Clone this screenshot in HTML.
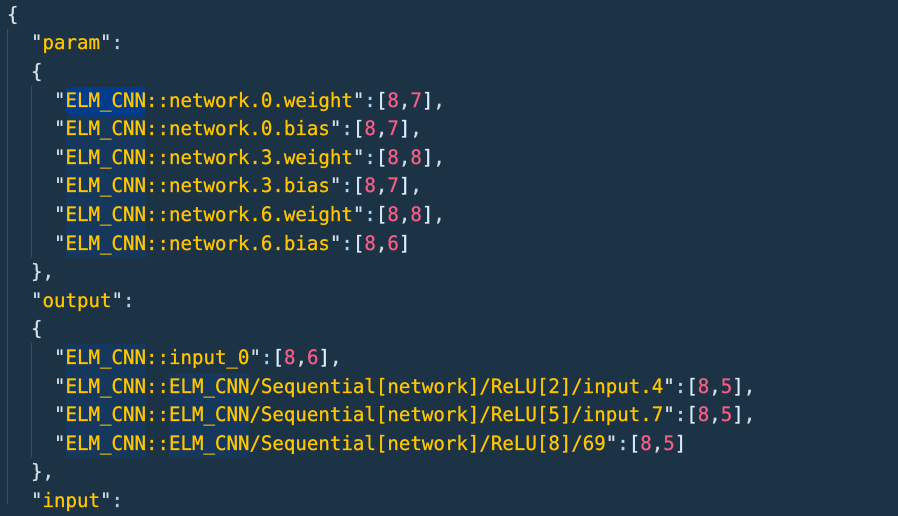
<!DOCTYPE html>
<html><head><meta charset="utf-8"><style>
html,body{margin:0;padding:0;}
body{width:898px;height:504px;overflow:hidden;background:#1c3346;position:relative;font-family:"DejaVu Sans Mono","Liberation Mono",monospace;font-size:19.1px;}
.l{position:absolute;left:0;height:28.6px;line-height:28.6px;white-space:pre;color:#d6dde3;-webkit-text-stroke:0.3px currentColor;}
.k{color:#ffc600;}
.n{color:#f75e86;}
.b{color:#dbeeff;}
.p{color:#d6dde3;}
.c{color:#a9d6f5;}
.h{background:#15385c;display:inline-block;height:28.6px;}
.h1{background:#003b8c;border-radius:5px;}
.g{position:absolute;width:1px;background:#3a4f61;}
</style></head><body>
<div class="g" style="left:7px;top:29px;height:475px"></div>
<div class="g" style="left:31px;top:86px;height:171px"></div>
<div class="g" style="left:31px;top:343px;height:114px"></div>
<div class="l" style="top:0.8px;left:7px">{</div>
<div class="l" style="top:29.4px;left:31px"><span class="p">"</span><span class="k">param</span><span class="p">"</span><span class="c">:</span></div>
<div class="l" style="top:58px;left:31px">{</div>
<div class="l" style="top:86.6px;left:54px"><span class="p">"</span><span class="k h h1">ELM_CNN</span><span class="k">::network.0.weight</span><span class="p">"</span><span class="c">:</span><span class="b">[</span><span class="n">8</span><span class="p">,</span><span class="n">7</span><span class="b">]</span><span class="p">,</span></div>
<div class="l" style="top:115.2px;left:54px"><span class="p">"</span><span class="k h">ELM_CNN</span><span class="k">::network.0.bias</span><span class="p">"</span><span class="c">:</span><span class="b">[</span><span class="n">8</span><span class="p">,</span><span class="n">7</span><span class="b">]</span><span class="p">,</span></div>
<div class="l" style="top:143.8px;left:54px"><span class="p">"</span><span class="k h">ELM_CNN</span><span class="k">::network.3.weight</span><span class="p">"</span><span class="c">:</span><span class="b">[</span><span class="n">8</span><span class="p">,</span><span class="n">8</span><span class="b">]</span><span class="p">,</span></div>
<div class="l" style="top:172.4px;left:54px"><span class="p">"</span><span class="k h">ELM_CNN</span><span class="k">::network.3.bias</span><span class="p">"</span><span class="c">:</span><span class="b">[</span><span class="n">8</span><span class="p">,</span><span class="n">7</span><span class="b">]</span><span class="p">,</span></div>
<div class="l" style="top:201px;left:54px"><span class="p">"</span><span class="k h">ELM_CNN</span><span class="k">::network.6.weight</span><span class="p">"</span><span class="c">:</span><span class="b">[</span><span class="n">8</span><span class="p">,</span><span class="n">8</span><span class="b">]</span><span class="p">,</span></div>
<div class="l" style="top:229.6px;left:54px"><span class="p">"</span><span class="k h">ELM_CNN</span><span class="k">::network.6.bias</span><span class="p">"</span><span class="c">:</span><span class="b">[</span><span class="n">8</span><span class="p">,</span><span class="n">6</span><span class="b">]</span></div>
<div class="l" style="top:258.2px;left:31px">},</div>
<div class="l" style="top:286.8px;left:31px"><span class="p">"</span><span class="k">output</span><span class="p">"</span><span class="c">:</span></div>
<div class="l" style="top:315.4px;left:31px">{</div>
<div class="l" style="top:344px;left:54px"><span class="p">"</span><span class="k h">ELM_CNN</span><span class="k">::input_0</span><span class="p">"</span><span class="c">:</span><span class="b">[</span><span class="n">8</span><span class="p">,</span><span class="n">6</span><span class="b">]</span><span class="p">,</span></div>
<div class="l" style="top:372.6px;left:54px"><span class="p">"</span><span class="k h">ELM_CNN</span><span class="k">::</span><span class="k h">ELM_CNN</span><span class="k">/Sequential[network]/ReLU[2]/input.4</span><span class="p">"</span><span class="c">:</span><span class="b">[</span><span class="n">8</span><span class="p">,</span><span class="n">5</span><span class="b">]</span><span class="p">,</span></div>
<div class="l" style="top:401.2px;left:54px"><span class="p">"</span><span class="k h">ELM_CNN</span><span class="k">::</span><span class="k h">ELM_CNN</span><span class="k">/Sequential[network]/ReLU[5]/input.7</span><span class="p">"</span><span class="c">:</span><span class="b">[</span><span class="n">8</span><span class="p">,</span><span class="n">5</span><span class="b">]</span><span class="p">,</span></div>
<div class="l" style="top:429.8px;left:54px"><span class="p">"</span><span class="k h">ELM_CNN</span><span class="k">::</span><span class="k h">ELM_CNN</span><span class="k">/Sequential[network]/ReLU[8]/69</span><span class="p">"</span><span class="c">:</span><span class="b">[</span><span class="n">8</span><span class="p">,</span><span class="n">5</span><span class="b">]</span></div>
<div class="l" style="top:458.4px;left:31px">},</div>
<div class="l" style="top:487px;left:31px"><span class="p">"</span><span class="k">input</span><span class="p">"</span><span class="c">:</span></div>
</body></html>
